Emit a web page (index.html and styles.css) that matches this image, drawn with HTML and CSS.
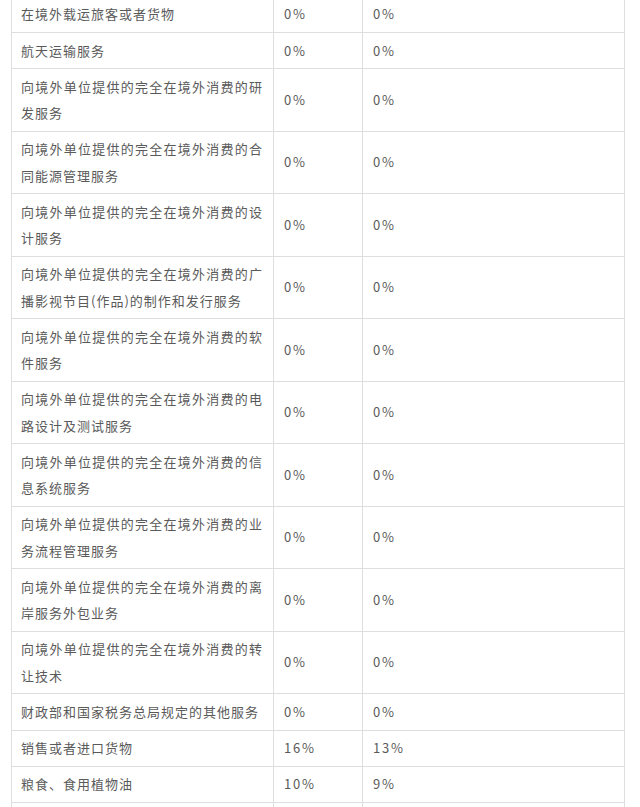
FILE: index.html
```html
<!DOCTYPE html>
<html lang="zh-CN">
<head>
<meta charset="utf-8">
<title>增值税税率表</title>
<link rel="stylesheet" href="styles.css">
</head>
<body>
<div class="rate-table" role="table">
  <div class="row" role="row"><div class="cell name">在境外载运旅客或者货物</div><div class="cell num">0%</div><div class="cell num">0%</div></div>
  <div class="row" role="row"><div class="cell name">航天运输服务</div><div class="cell num">0%</div><div class="cell num">0%</div></div>
  <div class="row" role="row"><div class="cell name"><span class="first">向境外单位提供的完全在境外消费的研</span>发服务</div><div class="cell num">0%</div><div class="cell num">0%</div></div>
  <div class="row" role="row"><div class="cell name"><span class="first">向境外单位提供的完全在境外消费的合</span>同能源管理服务</div><div class="cell num">0%</div><div class="cell num">0%</div></div>
  <div class="row" role="row"><div class="cell name"><span class="first">向境外单位提供的完全在境外消费的设</span>计服务</div><div class="cell num">0%</div><div class="cell num">0%</div></div>
  <div class="row" role="row"><div class="cell name"><span class="first">向境外单位提供的完全在境外消费的广</span>播影视节目(作品)的制作和发行服务</div><div class="cell num">0%</div><div class="cell num">0%</div></div>
  <div class="row" role="row"><div class="cell name"><span class="first">向境外单位提供的完全在境外消费的软</span>件服务</div><div class="cell num">0%</div><div class="cell num">0%</div></div>
  <div class="row" role="row"><div class="cell name"><span class="first">向境外单位提供的完全在境外消费的电</span>路设计及测试服务</div><div class="cell num">0%</div><div class="cell num">0%</div></div>
  <div class="row" role="row"><div class="cell name"><span class="first">向境外单位提供的完全在境外消费的信</span>息系统服务</div><div class="cell num">0%</div><div class="cell num">0%</div></div>
  <div class="row" role="row"><div class="cell name"><span class="first">向境外单位提供的完全在境外消费的业</span>务流程管理服务</div><div class="cell num">0%</div><div class="cell num">0%</div></div>
  <div class="row" role="row"><div class="cell name"><span class="first">向境外单位提供的完全在境外消费的离</span>岸服务外包业务</div><div class="cell num">0%</div><div class="cell num">0%</div></div>
  <div class="row" role="row"><div class="cell name"><span class="first">向境外单位提供的完全在境外消费的转</span>让技术</div><div class="cell num">0%</div><div class="cell num">0%</div></div>
  <div class="row" role="row"><div class="cell name">财政部和国家税务总局规定的其他服务</div><div class="cell num">0%</div><div class="cell num">0%</div></div>
  <div class="row" role="row"><div class="cell name">销售或者进口货物</div><div class="cell num">16%</div><div class="cell num">13%</div></div>
  <div class="row" role="row"><div class="cell name">粮食、食用植物油</div><div class="cell num">10%</div><div class="cell num">9%</div></div>
  <div class="row" role="row"><div class="cell name empty"></div><div class="cell num empty"></div><div class="cell num empty"></div></div>
</div>
</body>
</html>
```

FILE: styles.css
```css
html, body {
  margin: 0;
  padding: 0;
  background: #ffffff;
  overflow: hidden;
}

.rate-table {
  margin: -4.25px 0 0 11px;
  width: 613px;
  border-left: 1px solid #dedede;
  border-top: 1px solid #dedede;
  font-family: "Noto Sans CJK SC", "Noto Sans", sans-serif;
  font-size: 13px;
  letter-spacing: 1px;
  color: #5a5a5a;
}

.row {
  display: grid;
  grid-template-columns: 262px 89px 262px;
}

.cell {
  box-sizing: border-box;
  border-right: 1px solid #dedede;
  border-bottom: 1px solid #dedede;
  padding: 4.5px 10px 4.5px 9px;
  line-height: 26.25px;
}

.num {
  display: flex;
  align-items: center;
  padding-left: 10px;
  letter-spacing: 1.8px;
}

.empty {
  height: 36.25px;
}

.name .first {
  display: block;
  text-align: justify;
  text-align-last: justify;
}
```
